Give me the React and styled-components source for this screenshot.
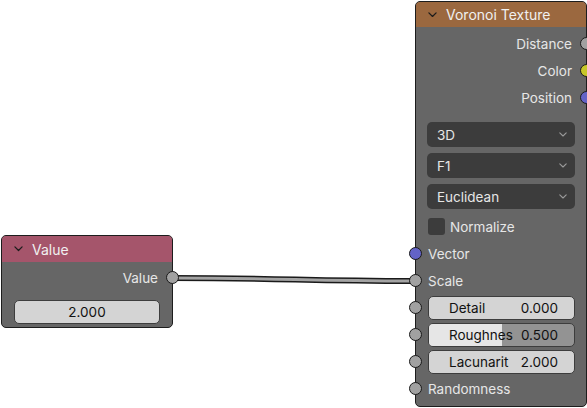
import React from 'react';
import styled, { createGlobalStyle } from 'styled-components';

const GlobalStyle = createGlobalStyle`
  html, body {
    margin: 0;
    padding: 0;
    background: #ffffff;
  }
  * {
    box-sizing: border-box;
  }
`;

const socketColors = {
  float: '#a1a1a1',
  color: '#c7c729',
  vector: '#6363c7',
};

const Stage = styled.div`
  position: relative;
  width: 587px;
  height: 408px;
  overflow: hidden;
  background: #ffffff;
  font-family: Inter, 'DejaVu Sans', sans-serif;
  font-size: 13.5px;
  color: #e6e6e6;
`;

const Links = styled.svg`
  position: absolute;
  left: 0;
  top: 0;
  width: 587px;
  height: 408px;
  pointer-events: none;
`;

const Node = styled.div`
  position: absolute;
  left: ${(p) => p.x}px;
  top: ${(p) => p.y}px;
  width: ${(p) => p.w}px;
  background: #666666;
  border: 1px solid #1d1d1d;
  border-radius: 5px;
  display: flex;
  flex-direction: column;
  padding-bottom: ${(p) => p.pb || 4}px;
`;

const Header = styled.div`
  height: ${(p) => p.h}px;
  background: ${(p) => p.color};
  border-radius: 4px 4px 0 0;
  display: flex;
  align-items: center;
  gap: 9px;
  padding-left: 12px;
  color: #f0f0f0;
  font-size: 14px;
`;

const Body = styled.div`
  display: flex;
  flex-direction: column;
  padding-top: ${(p) => p.pt || 0}px;
`;

const Row = styled.div`
  position: relative;
  height: 27px;
  display: flex;
  align-items: center;
  justify-content: ${(p) => (p.out ? 'flex-end' : 'flex-start')};
  padding: 0 ${(p) => (p.out ? 14 : 11)}px 0 ${(p) => (p.out ? 11 : 12)}px;
  margin-top: ${(p) => p.mt || 0}px;
`;

const Socket = styled.span`
  position: absolute;
  top: 50%;
  ${(p) => (p.out ? 'right: -7px;' : 'left: -7px;')}
  width: 13px;
  height: 13px;
  margin-top: -6.5px;
  border-radius: 50%;
  background: ${(p) => socketColors[p.kind]};
  border: 1px solid #1a1a1a;
`;

const Dropdown = styled.div`
  height: 25px;
  margin: 0 11px;
  background: #3c3c3c;
  border-radius: 5px;
  display: flex;
  align-items: center;
  justify-content: space-between;
  padding: 0 8px 0 10px;
  color: #e6e6e6;
`;

const DropList = styled.div`
  display: flex;
  flex-direction: column;
  gap: 6px;
  margin-top: 11px;
`;

const Check = styled.span`
  width: 17px;
  height: 17px;
  border-radius: 3px;
  background: #3c3c3c;
  margin-right: 5px;
`;

const Field = styled.div`
  position: relative;
  flex: 1;
  height: ${(p) => p.h || 24}px;
  border: 1px solid #3d3d3d;
  border-radius: 5px;
  background: ${(p) => (p.track ? '#939393' : '#d4d4d4')};
  color: #111111;
  overflow: hidden;
  display: flex;
  align-items: center;
  justify-content: ${(p) => (p.center ? 'center' : 'space-between')};
  padding: 0 ${(p) => (p.center ? 0 : 16)}px 0 ${(p) => (p.center ? 0 : 20)}px;
`;

const FieldRow = styled.div`
  display: flex;
  padding: 9px 12px 0 12px;
`;

const Fill = styled.span`
  position: absolute;
  left: 0;
  top: 0;
  bottom: 0;
  background: #e6e6e6;
`;

const FieldText = styled.span`
  position: relative;
`;

const Chevron = ({ size = 9, color = '#1c1c1c' }) => (
  <svg width={size} height={size * 0.6} viewBox="0 0 10 6" fill="none">
    <path d="M1 1 L5 5 L9 1" stroke={color} strokeWidth="1.4" strokeLinecap="round" strokeLinejoin="round" />
  </svg>
);

const SliderField = ({ label, value, fill }) => (
  <Row>
    <Socket kind="float" />
    <Field track={fill !== undefined}>
      {fill !== undefined && <Fill style={{ width: `${fill * 100}%` }} />}
      <FieldText>{label}</FieldText>
      <FieldText>{value}</FieldText>
    </Field>
  </Row>
);

const App = () => {
  return (
    <Stage>
      <GlobalStyle />
      <Links viewBox="0 0 587 408">
        <path d="M172 278 C 290 278, 300 281, 415 281" stroke="#1a1a1a" strokeWidth="6" fill="none" />
        <path d="M172 278 C 290 278, 300 281, 415 281" stroke="#a3a3a3" strokeWidth="3" fill="none" />
      </Links>

      <Node x={1} y={235} w={172} pb={3}>
        <Header h={26} color="#a5556b">
          <Chevron />
          Value
        </Header>
        <Body pt={2}>
          <Row out>
            Value
            <Socket out kind="float" />
          </Row>
          <FieldRow>
            <Field center h={24}>2.000</Field>
          </FieldRow>
        </Body>
      </Node>

      <Node x={415} y={1} w={172}>
        <Header h={25} color="#9b683f">
          <Chevron />
          Voronoi Texture
        </Header>
        <Body pt={3}>
          <Row out>
            Distance
            <Socket out kind="float" />
          </Row>
          <Row out>
            Color
            <Socket out kind="color" />
          </Row>
          <Row out>
            Position
            <Socket out kind="vector" />
          </Row>
          <DropList>
            <Dropdown>
              3D
              <Chevron size={8} color="#9a9a9a" />
            </Dropdown>
            <Dropdown>
              F1
              <Chevron size={8} color="#9a9a9a" />
            </Dropdown>
            <Dropdown>
              Euclidean
              <Chevron size={8} color="#9a9a9a" />
            </Dropdown>
          </DropList>
          <Row mt={4}>
            <Check />
            Normalize
          </Row>
          <Row>
            <Socket kind="vector" />
            Vector
          </Row>
          <Row>
            <Socket kind="float" />
            Scale
          </Row>
          <SliderField label="Detail" value="0.000" />
          <SliderField label="Roughnes" value="0.500" fill={0.5} />
          <SliderField label="Lacunarit" value="2.000" />
          <Row>
            <Socket kind="float" />
            Randomness
          </Row>
        </Body>
      </Node>
    </Stage>
  );
};

export default App;
